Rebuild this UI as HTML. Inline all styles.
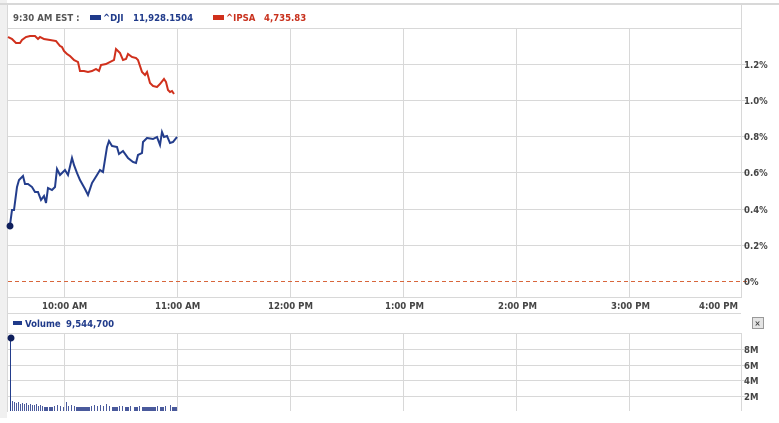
<!DOCTYPE html>
<html><head><style>
body{margin:0;width:779px;height:418px;background:#fff;overflow:hidden}
svg text{font-family:"DejaVu Sans Condensed","DejaVu Sans","Liberation Sans",sans-serif;font-weight:bold;font-size:9.5px}
</style></head><body>
<svg width="779" height="418" xmlns="http://www.w3.org/2000/svg">
<rect x="0" y="0" width="7" height="418" fill="#f0f0f0"/>
<rect x="0" y="3" width="779" height="2" fill="#d8d8d8"/>
<rect x="7" y="5" width="735" height="407" fill="#fff"/>
<g stroke="#d8d8d8" stroke-width="1" fill="none">
<line x1="7.5" y1="5" x2="7.5" y2="412"/>
<line x1="741.5" y1="5" x2="741.5" y2="298"/>
<line x1="8" y1="28.5" x2="741" y2="28.5"/>
<line x1="8" y1="64.5" x2="748" y2="64.5"/>
<line x1="8" y1="100.5" x2="748" y2="100.5"/>
<line x1="8" y1="136.5" x2="748" y2="136.5"/>
<line x1="8" y1="172.5" x2="748" y2="172.5"/>
<line x1="8" y1="209.5" x2="748" y2="209.5"/>
<line x1="8" y1="245.5" x2="748" y2="245.5"/>
<line x1="8" y1="297.5" x2="741" y2="297.5"/>
<line x1="8" y1="313.5" x2="741" y2="313.5"/>
<line x1="8" y1="333.5" x2="741" y2="333.5"/>
<line x1="8" y1="349.5" x2="748" y2="349.5"/>
<line x1="8" y1="365.5" x2="748" y2="365.5"/>
<line x1="8" y1="380.5" x2="748" y2="380.5"/>
<line x1="8" y1="396.5" x2="748" y2="396.5"/>
<line x1="741.5" y1="333" x2="741.5" y2="411"/>
<line x1="64.5" y1="28" x2="64.5" y2="297"/>
<line x1="177.5" y1="28" x2="177.5" y2="297"/>
<line x1="290.5" y1="28" x2="290.5" y2="297"/>
<line x1="403.5" y1="28" x2="403.5" y2="297"/>
<line x1="516.5" y1="28" x2="516.5" y2="297"/>
<line x1="629.5" y1="28" x2="629.5" y2="297"/>
<line x1="64.5" y1="333" x2="64.5" y2="411"/>
<line x1="177.5" y1="333" x2="177.5" y2="411"/>
<line x1="290.5" y1="333" x2="290.5" y2="411"/>
<line x1="403.5" y1="333" x2="403.5" y2="411"/>
<line x1="516.5" y1="333" x2="516.5" y2="411"/>
<line x1="629.5" y1="333" x2="629.5" y2="411"/>
</g>
<line x1="8" y1="281.5" x2="748" y2="281.5" stroke="#d8663c" stroke-width="1" stroke-dasharray="4,3"/>
<text x="13" y="21" fill="#555">9:30 AM EST :</text>
<rect x="90" y="15" width="11" height="5" fill="#1f3a8a"/>
<text x="103" y="21" fill="#1f3a8a">^DJI</text>
<text x="133" y="21" fill="#1f3a8a">11,928.1504</text>
<rect x="213" y="15" width="11" height="5" fill="#d0301c"/>
<text x="226" y="21" fill="#c8301c">^IPSA</text>
<text x="264" y="21" fill="#c8301c">4,735.83</text>
<g fill="#444">
<text x="744" y="68">1.2%</text><text x="744" y="104">1.0%</text>
<text x="744" y="140">0.8%</text><text x="744" y="176">0.6%</text>
<text x="744" y="213">0.4%</text><text x="744" y="249">0.2%</text>
<text x="744" y="285">0%</text>
<text x="744" y="353">8M</text><text x="744" y="369">6M</text>
<text x="744" y="384">4M</text><text x="744" y="400">2M</text>
<text x="42" y="309">10:00 AM</text><text x="155" y="309">11:00 AM</text>
<text x="268" y="309">12:00 PM</text><text x="385" y="309">1:00 PM</text>
<text x="498" y="309">2:00 PM</text><text x="611" y="309">3:00 PM</text>
<text x="699" y="309">4:00 PM</text>
</g>
<rect x="13" y="321" width="9" height="4" fill="#1f3a8a"/>
<text x="25" y="327" fill="#1f3a8a">Volume</text>
<text x="66" y="327" fill="#1f3a8a">9,544,700</text>
<rect x="752.5" y="317.5" width="11" height="11" fill="#e4e4e4" stroke="#999"/>
<text x="754.5" y="326" fill="#444" style="font-size:8px">×</text>
<polyline fill="none" stroke="#d0301c" stroke-width="2" points="8,37 12,39 16,43 20,43 22,40 26,37 30,36 35,36 38,39 40,37 44,39 50,40 56,41 60,46 62,47 64,51 67,54 70,56 74,60 78,62 80,71 84,71 88,72 92,71 96,69 99,71 101,65 106,64 110,62 114,60 116,49 120,53 123,60 126,59 128,54 132,57 136,58 138,60 142,72 145,75 147,72 150,83 153,86 157,87 160,84 164,79 166,82 168,90 170,92 172,91 174,94"/>
<polyline fill="none" stroke="#233d8c" stroke-width="2" points="10,225 12,210 14,210 17,187 19,180 23,176 25,184 28,184 32,187 35,192 38,192 41,200 44,196 46,203 48,188 52,190 55,187 57,169 60,175 65,170 68,175 72,158 74,165 77,173 80,180 85,189 88,195 92,183 97,175 100,170 103,172 107,147 109,141 112,146 117,147 119,154 123,151 128,158 133,162 136,163 138,155 142,153 143,142 147,138 153,139 157,137 160,145 162,132 164,137 167,136 170,143 173,142 177,137"/>
<circle cx="10" cy="226" r="3.5" fill="#0f1f5c"/>
<line x1="10.5" y1="338" x2="10.5" y2="411" stroke="#233d8c" stroke-width="1"/>
<circle cx="11" cy="338" r="3.5" fill="#0f1f5c"/>
<g fill="#4a5a9c">
<rect x="12" y="401" width="1" height="10"/><rect x="14" y="402" width="1" height="9"/><rect x="16" y="403" width="1" height="8"/><rect x="18" y="402" width="1" height="9"/><rect x="20" y="404" width="1" height="7"/><rect x="22" y="403" width="1" height="8"/><rect x="24" y="404" width="1" height="7"/><rect x="26" y="403" width="1" height="8"/><rect x="28" y="405" width="1" height="6"/><rect x="30" y="404" width="1" height="7"/><rect x="32" y="405" width="1" height="6"/><rect x="34" y="405" width="1" height="6"/><rect x="36" y="404" width="1" height="7"/><rect x="38" y="406" width="1" height="5"/><rect x="40" y="405" width="1" height="6"/><rect x="42" y="406" width="1" height="5"/><rect x="44" y="407" width="4" height="4"/><rect x="49" y="407" width="4" height="4"/><rect x="54" y="406" width="1" height="5"/><rect x="57" y="405" width="1" height="6"/><rect x="60" y="406" width="1" height="5"/><rect x="63" y="407" width="1" height="4"/><rect x="66" y="402" width="1" height="9"/><rect x="68" y="406" width="1" height="5"/><rect x="71" y="405" width="1" height="6"/><rect x="74" y="406" width="1" height="5"/><rect x="76" y="407" width="14" height="4"/><rect x="91" y="406" width="1" height="5"/><rect x="94" y="405" width="1" height="6"/><rect x="97" y="406" width="1" height="5"/><rect x="100" y="405" width="1" height="6"/><rect x="103" y="406" width="1" height="5"/><rect x="106" y="404" width="1" height="7"/><rect x="109" y="406" width="1" height="5"/><rect x="112" y="407" width="6" height="4"/><rect x="119" y="406" width="1" height="5"/><rect x="122" y="406" width="1" height="5"/><rect x="125" y="407" width="4" height="4"/><rect x="130" y="406" width="1" height="5"/><rect x="134" y="407" width="4" height="4"/><rect x="139" y="406" width="1" height="5"/><rect x="142" y="407" width="14" height="4"/><rect x="157" y="406" width="1" height="5"/><rect x="160" y="407" width="4" height="4"/><rect x="165" y="406" width="1" height="5"/><rect x="170" y="405" width="1" height="6"/><rect x="172" y="407" width="5" height="4"/>
</g>
</svg>
</body></html>
